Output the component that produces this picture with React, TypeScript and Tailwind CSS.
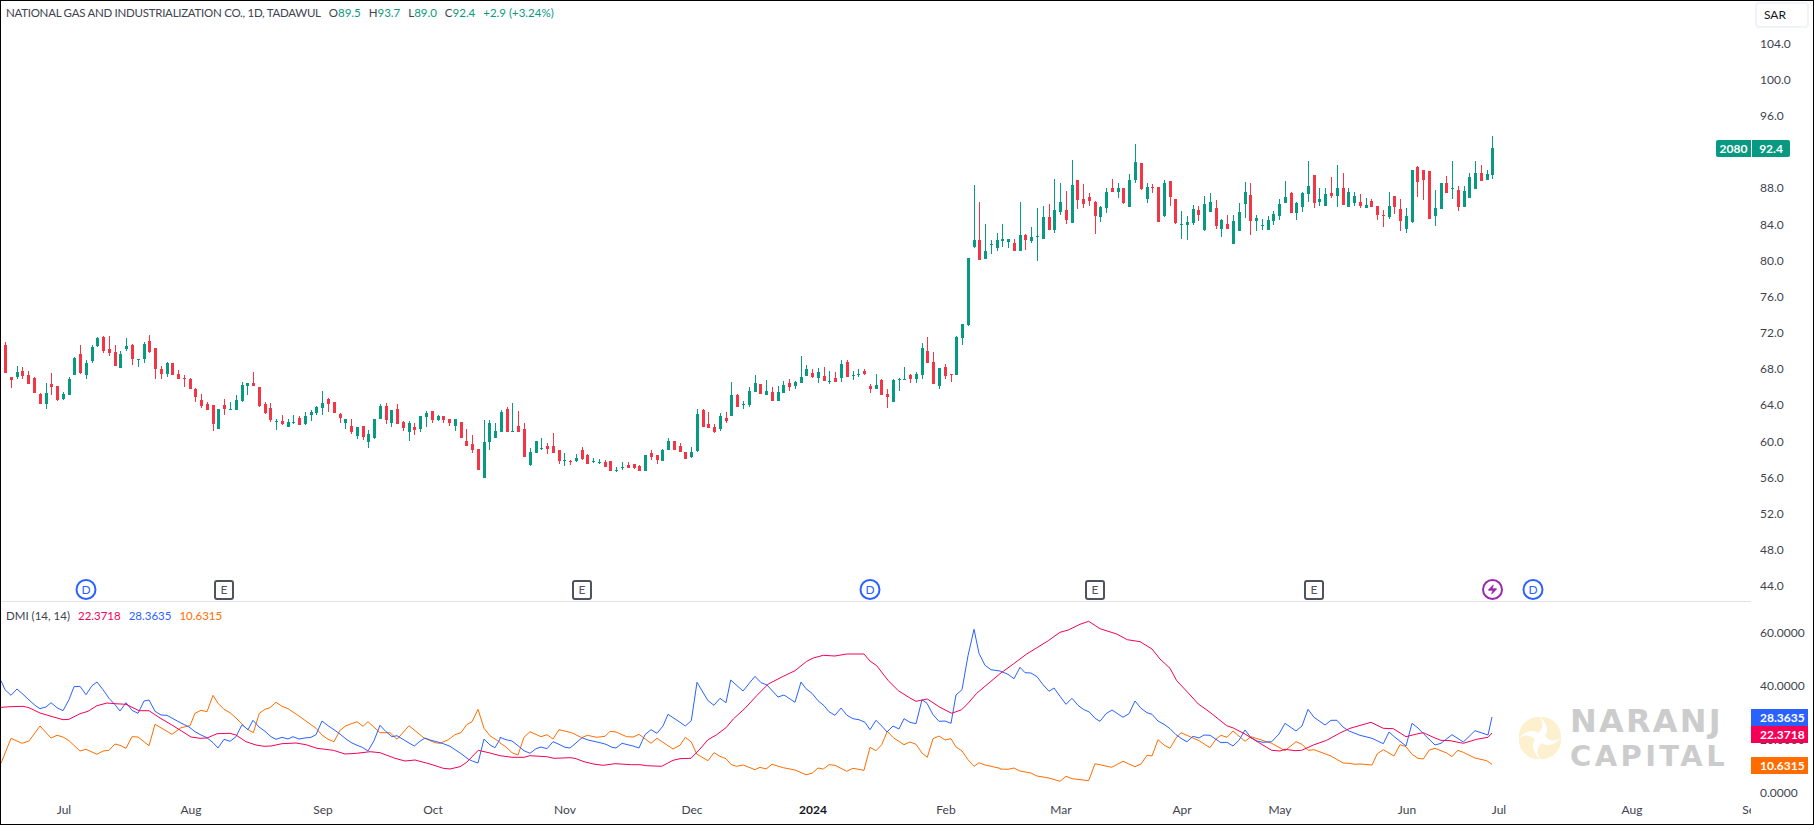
import { Zap } from 'lucide-react'

type Raw = [number, number, number, number, number, number]

// candles read off crops: x, up(1)/down(0), wick top, body top, body bottom, wick bottom
const part1: Raw[] = [
  [16,0,66,75,159,159],[34,0,171,171,180,204],[52,1,138,156,171,177],[67,0,141,153,168,177],[85,0,153,165,192,192],[103,0,171,174,219,219],[121,0,219,222,252,252],[139,1,189,219,252,267],[154,0,159,192,201,225],[172,0,198,198,240,243],
  [190,1,216,222,237,240],[208,1,171,177,225,225],[223,1,111,114,165,165],[241,0,75,102,159,162],[259,1,120,129,165,177],[277,1,75,81,123,129],[292,1,51,54,78,81],[310,0,48,51,93,99],[328,0,48,87,99,108],[346,0,75,96,138,138],
  [361,1,93,102,144,144],[379,1,54,78,87,93],[397,0,72,75,117,135],[415,1,118,118,120,141],[433,1,66,72,117,129],[448,0,45,63,96,99],[466,0,84,84,147,177],[484,0,138,147,162,177],[502,1,126,129,162,171],[517,0,129,129,165,165],
  [535,0,150,162,177,177],[553,0,165,174,177,201],[571,0,174,177,207,207],[586,0,204,207,231,246],[604,0,222,240,258,264],[622,0,246,252,270,270],[640,0,255,255,312,333],[655,1,267,267,327,327],[673,0,237,255,267,285],[691,1,246,267,270,270],
  [709,1,225,240,270,270],[727,1,186,195,243,246],[742,1,189,189,198,225],[760,0,156,189,198,198],[778,0,201,201,258,261],[796,0,246,252,279,282],[811,0,249,264,300,306],[829,1,297,303,306,330],[847,0,285,303,312,315],[865,1,297,306,321,321],
  [880,1,285,306,309,312],[898,0,288,294,315,315],[916,1,276,288,312,315],[934,1,270,276,285,303],[949,1,258,261,279,285],[967,1,213,249,264,285],[985,0,234,237,252,276],[1003,0,246,246,279,279],[1021,0,279,282,294,309],[1036,1,297,297,309,327],
  [1054,0,297,318,336,342],[1072,1,321,321,348,357],[1090,0,318,318,351,360],[1105,1,330,342,366,384],[1123,1,297,297,354,357],[1141,1,252,258,297,297],[1159,0,249,258,300,312],[1174,1,270,270,309,321],[1192,0,252,267,312,312],[1210,0,303,306,324,333],
  [1228,1,303,309,336,363],[1243,0,309,321,330,345],[1261,1,288,288,327,336],[1279,1,273,279,291,321],[1297,0,273,273,300,309],[1315,1,285,288,300,303],[1330,0,288,288,300,309],[1348,0,297,297,309,318],[1366,1,297,297,318,333],[1384,0,306,306,354,354],
  [1399,0,327,363,378,378],[1417,0,345,372,390,399],[1435,0,387,387,450,450],[1453,1,300,366,474,474],[1468,1,300,309,366,390],[1486,1,309,333,354,354],
]
const part2: Raw[] = [
  [4,1,240,246,306,306],[22,0,231,237,306,306],[37,1,219,303,306,306],[55,0,243,288,306,306],[73,0,279,297,381,381],[91,1,354,366,405,408],[109,1,333,333,369,369],[124,1,324,354,357,360],[142,0,339,348,357,372],[160,0,309,348,369,369],
  [178,0,360,360,393,402],[193,1,369,390,393,408],[211,0,390,393,396,405],[229,1,372,384,393,396],[247,0,351,360,387,390],[262,0,372,375,402,402],[280,1,384,393,396,399],[298,1,387,396,399,402],[316,0,390,396,411,411],[331,0,393,393,423,423],
  [349,1,411,420,423,426],[367,1,396,411,414,420],[385,0,396,405,414,414],[403,0,402,402,414,417],[418,0,405,408,423,423],[436,1,375,375,423,423],[454,0,360,369,381,390],[472,0,375,375,390,402],[487,1,357,360,393,393],[505,1,324,333,360,360],
  [523,0,333,333,360,360],[541,0,339,348,366,366],[556,0,366,366,387,387],[574,1,351,366,381,384],[592,1,237,252,363,366],[610,0,237,240,291,291],[625,0,246,282,294,294],[643,0,282,291,306,309],[661,1,249,258,297,303],[679,0,246,264,273,279],
  [694,1,156,195,258,258],[712,0,192,195,231,231],[730,1,213,222,225,237],[748,1,171,183,225,231],[766,1,135,159,186,186],[781,0,162,162,192,192],[799,1,150,183,195,195],[817,0,171,186,213,213],[835,1,168,186,213,213],[850,1,153,165,189,189],
  [868,0,147,159,171,183],[886,1,153,156,168,177],[904,1,78,141,159,159],[919,1,105,117,138,138],[937,0,117,129,141,144],[955,1,114,126,144,159],[973,0,111,138,153,153],[988,1,123,153,156,162],[1006,0,126,144,156,156],[1024,1,90,102,144,156],
  [1042,0,90,96,141,141],[1060,1,123,135,138,150],[1075,1,117,132,135,141],[1093,0,117,123,132,135],[1111,0,162,168,177,189],[1129,1,132,165,177,177],[1144,0,147,150,195,195],[1162,0,177,192,201,234],[1180,1,147,150,216,216],[1198,1,144,147,150,183],
  [1213,1,111,147,150,150],[1231,0,132,135,147,159],[1249,1,126,132,147,159],[1267,1,39,54,135,147],[1282,0,21,63,99,99],[1300,0,66,96,162,162],[1318,1,114,114,168,177],
]
const part3: Raw[] = [
  [16,0,582,591,618,627],[34,0,612,612,615,636],[49,1,498,501,615,615],[67,1,462,462,504,525],[85,1,264,264,465,468],[103,1,45,210,231,234],[118,0,96,210,270,270],[136,1,162,243,267,267],[154,1,210,222,225,252],[172,1,189,210,234,243],
  [187,1,162,207,213,231],[205,1,207,207,216,234],[223,0,207,219,243,243],[241,1,96,195,243,243],[256,0,192,195,210,240],[274,1,171,201,213,219],[292,1,114,198,201,273],[310,1,108,141,207,207],[328,0,102,141,180,180],[343,1,27,120,180,189],
  [361,1,39,96,126,135],[379,0,63,120,150,162],
]
const part4: Raw[] = [
  [326,1,90,165,279,279],[341,0,150,150,210,237],[358,0,162,207,222,234],[375,0,189,201,213,228],[393,0,213,216,258,312],[408,1,228,231,261,276],[425,1,174,186,234,249],[442,0,147,174,186,186],[460,1,159,174,186,204],[474,0,174,174,219,222],
  [492,1,132,150,231,231],[509,1,42,96,150,159],[526,0,99,99,177,180],[544,1,159,171,207,219],[559,0,162,171,174,189],[576,0,171,171,276,276],[593,1,150,159,258,261],[611,0,153,153,201,228],[625,0,207,207,279,282],[643,1,243,282,285,327],
  [660,1,258,276,285,330],[677,1,225,237,279,285],[692,0,228,240,255,273],[710,1,198,222,300,303],[727,1,189,216,246,246],[744,0,210,234,288,297],[759,1,267,270,297,321],[776,0,255,282,297,297],[794,1,255,273,342,342],[811,1,219,246,303,303],
  [829,1,156,186,222,264],[843,0,159,195,273,315],[860,1,255,264,273,303],[878,1,267,285,288,300],[895,1,258,270,300,300],[910,1,243,252,273,285],[927,1,207,222,258,270],[945,1,153,201,219,219],[962,0,186,189,249,249],[977,1,216,219,249,270],
  [994,1,186,189,231,246],[1012,1,93,168,192,216],[1029,0,135,135,219,234],[1044,1,174,207,216,228],[1061,1,174,192,228,228],[1078,0,141,189,198,204],[1096,1,105,174,198,231],[1113,0,129,174,225,225],[1128,1,174,186,231,231],[1145,1,186,198,219,228],
  [1162,0,192,216,228,234],[1180,1,204,225,234,234],[1195,0,207,213,231,231],[1212,0,228,228,255,270],[1229,0,240,255,258,291],[1247,1,186,228,261,267],[1262,0,198,198,231,252],[1279,0,207,237,273,303],[1296,1,234,258,297,309],[1314,1,120,120,276,279],
  [1329,0,108,111,156,201],[1346,0,120,120,150,210],[1363,0,123,123,267,267],[1380,1,180,234,258,288],[1398,1,159,159,237,237],[1413,0,138,159,189,189],[1430,1,93,174,177,207],[1447,0,168,180,231,243],[1465,1,168,183,231,231],[1479,1,129,141,204,204],
  [1497,1,93,129,177,177],[1514,0,105,129,153,153],[1531,1,120,132,150,150],[1546,1,18,54,135,147],
]

const candles = [
  ...part1.map((c) => mapCandle(c, 0, 3, 320)),
  ...part2.map((c) => mapCandle(c, 500, 3, 330)),
  ...part3.map((c) => mapCandle(c, 940, 3, 170)),
  ...part4.map((c) => mapCandle(c, 960, 2.904, 130)),
]

function mapCandle(c: Raw, x0: number, sx: number, y0: number) {
  return {
    x: Math.floor(x0 + c[0] / sx),
    up: c[1] === 1,
    wt: y0 + c[2] / 3,
    bt: y0 + c[3] / 3,
    bb: y0 + c[4] / 3,
    wb: y0 + c[5] / 3,
  }
}

type Pt = [number, number]

const blue: Pt[][] = [
  [[3,335],[15,362],[33,379],[51,360],[69,376],[87,393],[105,409],[120,419],[138,414],[153,401],[171,416],[189,425],[207,392],[222,353],[240,352],[258,377],[276,350],[291,339],[309,362],[327,388],[345,407],[360,426],[378,401],[396,424],[414,433],[432,396],[447,393],[465,427],[483,438],[501,439],[519,449],[543,462],[567,474],[585,488],[603,498],[621,506],[639,521],[654,537],[672,511],[690,517],[708,503],[726,467],[744,482],[759,454],[777,474],[795,487],[813,503],[828,511],[846,505],[864,510],[879,503],[897,510],[915,507],[933,505],[948,497],[966,456],[984,470],[1002,482],[1020,495],[1038,510],[1056,522],[1074,530],[1087,535],[1104,546],[1122,515],[1140,469],[1158,488],[1176,503],[1191,500],[1209,511],[1227,522],[1243,531],[1261,516],[1275,507],[1293,514],[1310,518],[1330,524],[1350,532],[1368,544],[1386,556],[1404,570],[1417,576],[1434,582],[1452,510],[1470,528],[1485,536],[1500,510]],
  [[0,415],[18,422],[36,426],[54,440],[72,455],[90,463],[108,449],[123,444],[141,449],[159,428],[177,436],[195,445],[210,447],[228,432],[246,416],[264,423],[300,431],[318,436],[336,445],[348,447],[366,433],[399,441],[417,447],[435,407],[453,392],[471,403],[489,381],[504,346],[540,370],[556,381],[574,365],[591,250],[624,305],[642,319],[660,298],[678,311],[692,243],[729,276],[765,232],[783,251],[801,258],[834,294],[852,288],[885,310],[903,249],[918,269],[936,283],[954,305],[972,320],[987,338],[1005,349],[1023,327],[1041,349],[1059,359],[1077,362],[1095,370],[1110,392],[1128,364],[1146,382],[1161,399],[1179,381],[1197,390],[1212,359],[1230,370],[1248,374],[1266,302],[1281,313],[1299,347],[1317,367],[1335,366],[1353,373],[1368,288],[1386,272],[1404,170],[1422,91],[1437,163],[1455,199],[1473,212],[1500,216]],
  [[24,226],[42,239],[60,205],[75,221],[93,222],[111,233],[129,257],[147,277],[162,267],[180,292],[198,316],[216,298],[234,319],[250,331],[268,339],[285,358],[300,367],[318,344],[336,333],[351,343],[369,355],[387,344],[405,306],[423,328],[441,341],[456,346],[474,366],[492,376],[510,389],[528,407],[546,420],[561,428],[579,412],[597,417],[612,408],[630,409],[648,421],[663,431],[681,430],[699,441],[717,424],[735,393],[753,416],[771,426],[789,430],[815,428],[837,405],[855,373],[888,396],[906,381],[924,331],[942,355],[975,378],[993,364],[1011,364],[1029,384],[1047,396],[1080,409],[1116,418],[1150,434],[1167,399],[1185,415],[1218,441],[1236,373],[1254,387],[1272,406],[1305,438],[1323,433],[1356,407],[1390,429],[1425,395],[1446,402],[1464,408],[1476,354]],
]
const pink: Pt[][] = [
  [[3,415],[33,413],[69,412],[87,416],[120,432],[150,441],[189,452],[207,451],[240,434],[264,427],[291,410],[321,402],[345,404],[378,406],[417,425],[447,425],[480,447],[519,470],[546,487],[573,504],[600,508],[621,507],[651,494],[690,493],[708,498],[738,518],[768,528],[792,532],[813,531],[846,524],[888,522],[918,527],[951,538],[1000,544],[1035,555],[1070,553],[1110,548],[1140,551],[1185,568],[1215,576],[1245,573],[1290,585],[1330,598],[1350,600],[1380,593],[1400,580],[1435,544],[1470,552],[1500,560]],
  [[0,470],[36,475],[72,475],[90,470],[140,473],[162,478],[210,476],[225,478],[252,488],[285,496],[310,499],[345,494],[395,497],[420,497],[440,500],[485,502],[519,484],[540,479],[573,478],[600,450],[624,422],[650,407],[678,386],[700,360],[735,328],[770,290],[805,255],[850,232],[885,215],[920,187],[940,177],[970,169],[1005,171],[1040,165],[1092,165],[1110,186],[1130,200],[1165,245],[1195,275],[1230,297],[1248,307],[1282,300],[1320,325],[1355,343],[1385,332],[1405,312],[1430,283],[1500,224]],
  [[40,195],[80,165],[145,125],[180,100],[205,93],[240,76],[266,67],[300,89],[350,105],[382,122],[420,128],[456,150],[480,180],[510,208],[530,245],[565,282],[595,315],[630,340],[680,380],[700,387],[735,405],[775,430],[815,454],[840,456],[855,451],[885,455],[905,454],[940,438],[980,424],[1020,402],[1050,388],[1113,370],[1150,388],[1180,389],[1218,413],[1250,405],[1270,401],[1305,417],[1323,424],[1350,425],[1390,433],[1430,421],[1464,415],[1476,402]],
]
const orange: Pt[][] = [
  [[3,583],[33,508],[66,523],[87,516],[120,471],[153,507],[171,499],[189,504],[207,515],[240,546],[258,541],[291,556],[309,546],[327,544],[345,525],[360,529],[378,538],[396,503],[414,504],[447,530],[465,466],[516,496],[543,476],[570,470],[585,433],[603,424],[621,428],[639,379],[654,403],[672,421],[690,431],[708,447],[741,480],[760,491],[778,433],[795,421],[810,416],[828,400],[846,412],[864,419],[897,441],[933,467],[948,478],[966,498],[984,511],[1002,518],[1020,484],[1038,470],[1071,458],[1089,472],[1104,458],[1140,491],[1170,491],[1191,511],[1227,470],[1272,507],[1305,521],[1320,523],[1345,512],[1365,497],[1383,491],[1400,467],[1416,458],[1434,421],[1452,478],[1470,500],[1500,520]],
  [[0,432],[18,444],[36,461],[54,468],[72,415],[90,398],[123,413],[141,407],[159,420],[177,392],[215,401],[245,416],[262,409],[290,415],[315,412],[330,397],[348,399],[380,413],[400,414],[417,406],[453,433],[471,418],[519,450],[540,439],[556,415],[574,429],[590,465],[624,485],[642,461],[660,472],[678,479],[694,497],[710,502],[730,498],[765,512],[780,505],[798,510],[816,496],[850,506],[885,513],[918,527],[936,523],[954,507],[970,510],[987,497],[1005,499],[1040,517],[1059,508],[1092,514],[1110,445],[1128,455],[1145,437],[1162,397],[1180,416],[1212,437],[1230,429],[1248,436],[1266,462],[1282,475],[1299,419],[1317,411],[1335,423],[1353,419],[1368,444],[1386,456],[1404,482],[1422,502],[1437,491],[1455,498],[1473,502],[1500,508]],
  [[0,510],[24,511],[42,507],[60,516],[93,522],[111,531],[147,537],[180,547],[198,532],[216,539],[266,545],[285,494],[335,505],[369,487],[405,503],[423,495],[441,469],[456,471],[474,422],[492,438],[510,448],[528,417],[543,401],[597,425],[630,446],[648,420],[663,409],[681,415],[699,396],[735,427],[753,413],[815,433],[855,455],[888,428],[906,436],[924,454],[942,452],[993,471],[1029,492],[1047,493],[1065,496],[1080,495],[1116,498],[1132,464],[1150,452],[1182,471],[1200,437],[1218,443],[1236,466],[1254,478],[1270,480],[1288,453],[1305,448],[1340,462],[1356,473],[1373,454],[1390,460],[1425,477],[1460,485],[1476,496]],
]

function linePts(parts: Pt[][]) {
  const origin: Pt[] = [[0, 570], [500, 600], [1000, 600]]
  return parts
    .flatMap((p, i) => p.map(([x, y]) => `${(origin[i][0] + x / 3).toFixed(1)},${(origin[i][1] + y / 3).toFixed(1)}`))
    .join(' ')
}

// 92.0 sits under the last-price badge, the row is kept empty
const prices = ['104.0', '100.0', '96.0', '', '88.0', '84.0', '80.0', '76.0', '72.0', '68.0', '64.0', '60.0', '56.0', '52.0', '48.0', '44.0']
const dmiTicks = ['60.0000', '40.0000', '20.0000', '0.0000']

const months = [
  { t: 'Jul', x: 63 },
  { t: 'Aug', x: 190 },
  { t: 'Sep', x: 322 },
  { t: 'Oct', x: 432 },
  { t: 'Nov', x: 564 },
  { t: 'Dec', x: 691 },
  { t: '2024', x: 812, bold: true },
  { t: 'Feb', x: 945 },
  { t: 'Mar', x: 1060 },
  { t: 'Apr', x: 1181 },
  { t: 'May', x: 1279 },
  { t: 'Jun', x: 1406 },
  { t: 'Jul', x: 1498 },
  { t: 'Aug', x: 1631 },
  { t: 'Sep', x: 1751 },
]

function Dividend({ x }: { x: number }) {
  return (
    <div
      className="absolute top-[578px] flex h-[21px] w-[21px] -translate-x-1/2 items-center justify-center rounded-full border-2 border-[#2962ff] bg-white text-[12px] text-[#2962ff]"
      style={{ left: x }}
    >
      D
    </div>
  )
}

function Earnings({ x }: { x: number }) {
  return (
    <div
      className="absolute top-[579px] flex h-[20px] w-[20px] -translate-x-1/2 items-center justify-center rounded-[3px] border-2 border-[#50535e] bg-white text-[12px] text-[#50535e]"
      style={{ left: x }}
    >
      E
    </div>
  )
}

function Badge({ bg, children }: { bg: string; children: string }) {
  return <div className={`flex h-[17px] items-center pl-[9px] text-[12px] font-bold text-white ${bg}`}>{children}</div>
}

function Logo() {
  const petal = 'M1 22C0 9 11 0 22 1C26 8 25 13 20 17C15 13 7 15 1 22Z'
  return (
    <svg width="44" height="44" viewBox="0 0 44 44" fill="#fdf0cf">
      <path d={petal} />
      <path d={petal} transform="rotate(90 22 22)" />
      <path d={petal} transform="rotate(180 22 22)" />
      <path d={petal} transform="rotate(270 22 22)" />
    </svg>
  )
}

export default function App() {
  return (
    <div className="flex h-[825px] w-[1814px] overflow-hidden border border-black bg-white font-['Lato',sans-serif] text-[12px] text-[#131722]">
      <div className="relative flex w-[1750px] flex-col">
        {/* price pane */}
        <section className="relative h-[601px] border-b border-[#e0e3eb]">
          <svg className="block h-[600px] w-[1750px]" viewBox="1 1 1750 600" shapeRendering="crispEdges">
            {candles.map((c, i) => (
              <g key={i} fill={c.up ? '#089981' : '#f23645'}>
                <rect x={c.x} y={c.wt} width={1} height={c.wb - c.wt} />
                <rect x={c.x - 1} y={c.bt} width={3} height={Math.max(c.bb - c.bt, 1)} />
              </g>
            ))}
          </svg>
          <div className="absolute left-[5px] top-[3px] flex gap-[8px] whitespace-nowrap text-[11.5px] leading-[18px]">
            <span className="tracking-[-0.27px] text-[#40434f]">NATIONAL GAS AND INDUSTRIALIZATION CO., 1D, TADAWUL</span>
            <span className="flex gap-[8px] text-[#089981]">
              <span><i className="not-italic text-[#40434f]">O</i>89.5</span>
              <span><i className="not-italic text-[#40434f]">H</i>93.7</span>
              <span><i className="not-italic text-[#40434f]">L</i>89.0</span>
              <span><i className="not-italic text-[#40434f]">C</i>92.4</span>
              <span>+2.9 (+3.24%)</span>
            </span>
          </div>
          <Dividend x={85} />
          <Earnings x={223} />
          <Earnings x={581} />
          <Dividend x={869} />
          <Earnings x={1094} />
          <Earnings x={1313} />
          <div className="absolute left-[1481px] top-[578px] flex h-[21px] w-[21px] items-center justify-center rounded-full border-2 border-[#9c27b0] bg-white text-[#9c27b0]">
            <Zap size={11} fill="#9c27b0" strokeWidth={1} />
          </div>
          <Dividend x={1532} />
        </section>

        {/* DMI pane */}
        <section className="relative h-[198px]">
          <svg className="block h-[198px] w-[1750px]" viewBox="1 603 1750 198" fill="none" strokeWidth={1} strokeLinejoin="round">
            <polyline points={linePts(orange)} stroke="#ff6d00" />
            <polyline points={linePts(blue)} stroke="#2962ff" />
            <polyline points={linePts(pink)} stroke="#f50057" />
          </svg>
          <div className="absolute left-[5px] top-[5px] flex gap-[8px] whitespace-nowrap text-[11.5px] leading-[18px]">
            <span className="text-[#40434f]">DMI (14, 14)</span>
            <span className="text-[#f50057]">22.3718</span>
            <span className="text-[#2962ff]">28.3635</span>
            <span className="text-[#ff6d00]">10.6315</span>
          </div>
          <div className="absolute left-[1517px] top-[101px] flex items-center gap-[8px]">
            <Logo />
            <div className="flex flex-col font-['DejaVu_Sans',sans-serif] font-bold text-[#cccccc]">
              <span className="text-[32px] leading-[36px] tracking-[2.2px]">NARANJ</span>
              <span className="text-[29px] leading-[34px] tracking-[3.4px]">CAPITAL</span>
            </div>
          </div>
        </section>

        {/* time axis */}
        <div className="relative h-[24px] overflow-hidden text-[#40434f]">
          {months.map((m, i) => (
            <span
              key={i}
              className={`absolute top-[1px] -translate-x-1/2 ${m.bold ? 'font-bold text-[#131722]' : ''}`}
              style={{ left: m.x }}
            >
              {m.t}
            </span>
          ))}
        </div>
      </div>

      {/* right axis */}
      <div className="relative flex w-[62px] flex-col text-[#40434f]">
        <div className="mx-[4px] mt-[1px] flex h-[26px] items-center rounded-[4px] border-2 border-[#f0f3fa] pl-[7px] text-[#131722]">SAR</div>
        <div className="mt-[-2.5px] flex flex-col pl-[9px]">
          {prices.map((p, i) => (
            <div key={i} className="flex h-[36.2px] items-center">{p}</div>
          ))}
        </div>
        <div className="mt-[2px] flex flex-col pl-[9px]">
          {dmiTicks.map((p) => (
            <div key={p} className="flex h-[53.3px] items-center">{p}</div>
          ))}
        </div>
        <div className="absolute left-[-35px] top-[139px] flex h-[17px] items-center gap-px rounded-[2px] bg-white text-[12px] font-bold text-white">
          <span className="flex h-full w-[35px] items-center justify-center rounded-l-[2px] bg-[#089981]">2080</span>
          <span className="flex h-full w-[38px] items-center justify-center rounded-r-[2px] bg-[#089981]">92.4</span>
        </div>
        <div className="absolute left-0 top-[708px] w-[57px]">
          <Badge bg="bg-[#2962ff]">28.3635</Badge>
          <Badge bg="bg-[#f50057]">22.3718</Badge>
          <div className="mt-[14px]">
            <Badge bg="bg-[#ff6d00]">10.6315</Badge>
          </div>
        </div>
      </div>
    </div>
  )
}
